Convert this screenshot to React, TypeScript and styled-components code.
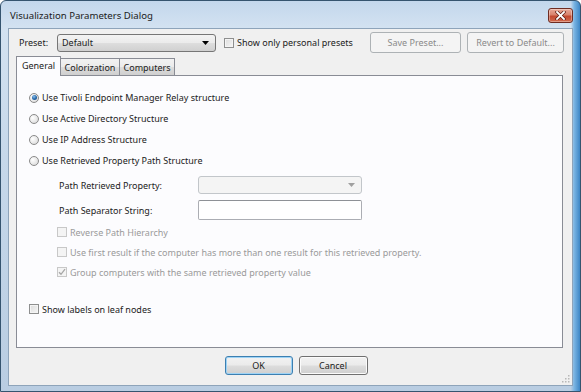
import React from "react";
import styled, { createGlobalStyle, css } from "styled-components";

const FONT = `"Noto Sans", "Open Sans", "Liberation Sans", sans-serif`;

const Global = createGlobalStyle`
  html, body { margin: 0; padding: 0; background: #ffffff; }
  body { font-family: ${FONT}; }
  * { box-sizing: border-box; }
`;

const Window = styled.div`
  width: 581px;
  height: 392px;
  display: flex;
  flex-direction: column;
  border: 1px solid #35546f;
  border-radius: 6px 6px 0 0;
  background:
    linear-gradient(90deg, rgba(0,0,0,0) 98.4%, #7ab4e2 99%, #3d86c6 100%),
    linear-gradient(180deg, #c3d7ec 0%, #d3e2f1 7%, #c6d8ea 40%, #b9cde2 100%);
  font-family: ${FONT};
  font-size: 9px;
  color: #1b1b1b;
  overflow: hidden;
`;

const TitleBar = styled.div`
  height: 27px;
  display: flex;
  align-items: flex-start;
  padding: 0 7px 0 9px;
`;

const Title = styled.div`
  font-size: 9.6px;
  line-height: 14px;
  margin-top: 8px;
  color: #1a1a1a;
`;

const CloseButton = styled.div`
  margin-left: auto;
  margin-top: 7px;
  width: 25px;
  height: 15px;
  border: 1px solid #6e2c22;
  border-radius: 3px;
  background: linear-gradient(180deg, #e8a898 0%, #d8826c 45%, #c2482f 55%, #d06a4e 100%);
  display: flex;
  align-items: center;
  justify-content: center;
  box-shadow: inset 0 0 0 1px rgba(255,255,255,0.35);
`;

const Client = styled.div`
  flex: 1;
  margin: 0 7px 5px 7px;
  background: #f0f0f0;
  border: 1px solid #8ea4ba;
  display: flex;
  flex-direction: column;
  position: relative;
`;

const TopRow = styled.div`
  display: flex;
  align-items: center;
  height: 21px;
  margin-top: 3px;
  padding: 0 8px 0 10px;
`;

const Label = styled.span<{ $disabled?: boolean }>`
  white-space: nowrap;
  color: ${(p) => (p.$disabled ? "#9a9a9a" : "#1b1b1b")};
`;

const PresetLabel = styled(Label)`
  width: 38px;
`;

const ComboBox = styled.div<{ $disabled?: boolean; $width: number }>`
  width: ${(p) => p.$width}px;
  height: 18px;
  display: flex;
  align-items: center;
  padding: 0 6px 0 4px;
  border-radius: 3px;
  ${(p) =>
    p.$disabled
      ? css`
          border: 1px solid #c2c6ca;
          background: #f4f4f4;
        `
      : css`
          border: 1px solid #767676;
          background: linear-gradient(180deg, #f3f3f3 0%, #ebebeb 48%, #dddddd 52%, #d0d0d0 100%);
        `}
`;

const ComboText = styled.span`
  flex: 1;
`;

const CheckRow = styled.label<{ $indent?: number; $mt?: number }>`
  display: flex;
  align-items: center;
  height: 20px;
  margin-left: ${(p) => p.$indent ?? 0}px;
  margin-top: ${(p) => p.$mt ?? 0}px;
  gap: 3px;
`;

const Box = styled.span<{ $disabled?: boolean }>`
  width: 10px;
  height: 10px;
  flex: none;
  display: flex;
  align-items: center;
  justify-content: center;
  ${(p) =>
    p.$disabled
      ? css`
          border: 1px solid #c8c8c8;
          background: #f4f4f4;
        `
      : css`
          border: 1px solid #8e8f8f;
          background: linear-gradient(135deg, #dcdcdc 0%, #f6f6f6 100%);
          box-shadow: inset 0 0 0 1px #f4f4f4;
        `}
`;

const Radio = styled.span<{ $checked?: boolean }>`
  width: 10px;
  height: 10px;
  border-radius: 50%;
  flex: none;
  border: 1px solid #8a8a8a;
  background: radial-gradient(circle at 35% 35%, #ffffff 0%, #e6e6e6 60%, #cfcfcf 100%);
  display: flex;
  align-items: center;
  justify-content: center;
  &::after {
    content: "";
    display: ${(p) => (p.$checked ? "block" : "none")};
    width: 5px;
    height: 5px;
    border-radius: 50%;
    background: radial-gradient(circle at 40% 35%, #8cc0ea 0%, #2a6db0 50%, #163e70 100%);
  }
`;

const ActionButton = styled.div<{ $width: number; $disabled?: boolean; $default?: boolean }>`
  width: ${(p) => p.$width}px;
  height: ${(p) => (p.$disabled ? 21 : 19)}px;
  border-radius: 3px;
  display: flex;
  align-items: center;
  justify-content: center;
  ${(p) =>
    p.$disabled
      ? css`
          border: 1px solid #adb2b5;
          background: #f4f4f4;
          color: #8a8a8a;
        `
      : p.$default
      ? css`
          border: 1px solid #3c7fb1;
          background: linear-gradient(180deg, #f2f2f2 0%, #ebebeb 48%, #dddddd 52%, #cfcfcf 100%);
          box-shadow: inset 0 0 0 1px #9ed3f5;
        `
      : css`
          border: 1px solid #707070;
          background: linear-gradient(180deg, #f2f2f2 0%, #ebebeb 48%, #dddddd 52%, #cfcfcf 100%);
          box-shadow: inset 0 0 0 1px #fbfbfb;
        `}
`;

const Spacer = styled.div`
  flex: 1;
`;

const ButtonGroup = styled.div`
  display: flex;
  gap: 6px;
`;

const Tabs = styled.div`
  display: flex;
  align-items: flex-end;
  height: 22px;
  padding-left: 7px;
  position: relative;
  z-index: 1;
`;

const Tab = styled.div<{ $selected?: boolean; $width: number }>`
  width: ${(p) => p.$width}px;
  display: flex;
  align-items: center;
  justify-content: center;
  border: 1px solid #898c95;
  margin-left: -1px;
  ${(p) =>
    p.$selected
      ? css`
          height: 20px;
          border-bottom: none;
          background: #fcfcfe;
          margin-bottom: -1px;
          padding-bottom: 2px;
          margin-left: 0;
        `
      : css`
          height: 17px;
          border-bottom: none;
          background: linear-gradient(180deg, #f2f2f2 0%, #ebebeb 50%, #dddddd 51%, #cfcfcf 100%);
        `}
`;

const Panel = styled.div`
  flex: 1;
  margin: 0 9px 0 7px;
  border: 1px solid #898c95;
  background: #fcfcfe;
  padding: 11px 12px 0 12px;
  display: flex;
  flex-direction: column;
`;

const RadioRow = styled.label`
  display: flex;
  align-items: center;
  height: 21px;
  gap: 3px;
`;

const FieldGrid = styled.div`
  display: grid;
  grid-template-columns: 139px 164px;
  row-gap: 6px;
  margin: 5px 0 0 30px;
  align-items: center;
`;

const TextBox = styled.div`
  height: 20px;
  border: 1px solid #abadb3;
  border-top-color: #8e9196;
  background: #ffffff;
  border-radius: 2px;
`;

const Footer = styled.div`
  display: flex;
  justify-content: center;
  gap: 6px;
  padding: 8px 0 10px 11px;
`;

const Grip = styled.svg`
  position: absolute;
  right: 2px;
  bottom: 2px;
`;

const Arrow = ({ color }: { color: string }) => (
  <svg width="7" height="4" viewBox="0 0 7 4">
    <path d="M0 0 H7 L3.5 4 Z" fill={color} />
  </svg>
);

const Check = () => (
  <svg width="8" height="8" viewBox="0 0 8 8">
    <path d="M1 4.2 L3 6.3 L7 1.2" stroke="#a6a6a6" strokeWidth="1.3" fill="none" />
  </svg>
);

export default function App() {
  return (
    <>
      <Global />
      <Window>
        <TitleBar>
          <Title>Visualization Parameters Dialog</Title>
          <CloseButton>
            <svg width="11" height="9" viewBox="0 0 11 9">
              <path d="M2 1 L9 8 M9 1 L2 8" stroke="#5a1a10" strokeWidth="3.2" strokeLinecap="square" />
              <path d="M2 1 L9 8 M9 1 L2 8" stroke="#ffffff" strokeWidth="1.8" strokeLinecap="square" />
            </svg>
          </CloseButton>
        </TitleBar>
        <Client>
          <TopRow>
            <PresetLabel>Preset:</PresetLabel>
            <ComboBox $width={159}>
              <ComboText>Default</ComboText>
              <Arrow color="#000000" />
            </ComboBox>
            <CheckRow $indent={8}>
              <Box />
              <Label>Show only personal presets</Label>
            </CheckRow>
            <Spacer />
            <ButtonGroup>
              <ActionButton $width={91} $disabled>Save Preset...</ActionButton>
              <ActionButton $width={97} $disabled>Revert to Default...</ActionButton>
            </ButtonGroup>
          </TopRow>
          <Tabs>
            <Tab $selected $width={45}>General</Tab>
            <Tab $width={60}>Colorization</Tab>
            <Tab $width={56}>Computers</Tab>
          </Tabs>
          <Panel>
            <RadioRow>
              <Radio $checked />
              <Label>Use Tivoli Endpoint Manager Relay structure</Label>
            </RadioRow>
            <RadioRow>
              <Radio />
              <Label>Use Active Directory Structure</Label>
            </RadioRow>
            <RadioRow>
              <Radio />
              <Label>Use IP Address Structure</Label>
            </RadioRow>
            <RadioRow>
              <Radio />
              <Label>Use Retrieved Property Path Structure</Label>
            </RadioRow>
            <FieldGrid>
              <Label>Path Retrieved Property:</Label>
              <ComboBox $width={164} $disabled>
                <ComboText />
                <Arrow color="#a0a0a0" />
              </ComboBox>
              <Label>Path Separator String:</Label>
              <TextBox />
            </FieldGrid>
            <CheckRow $indent={28} $mt={2}>
              <Box $disabled />
              <Label $disabled>Reverse Path Hierarchy</Label>
            </CheckRow>
            <CheckRow $indent={28}>
              <Box $disabled />
              <Label $disabled>Use first result if the computer has more than one result for this retrieved property.</Label>
            </CheckRow>
            <CheckRow $indent={28}>
              <Box $disabled>
                <Check />
              </Box>
              <Label $disabled>Group computers with the same retrieved property value</Label>
            </CheckRow>
            <CheckRow $mt={17}>
              <Box />
              <Label>Show labels on leaf nodes</Label>
            </CheckRow>
          </Panel>
          <Footer>
            <ActionButton $width={68} $default>OK</ActionButton>
            <ActionButton $width={69}>Cancel</ActionButton>
          </Footer>
          <Grip width="9" height="9" viewBox="0 0 9 9">
            {[
              [7, 1], [7, 4], [4, 4], [7, 7], [4, 7], [1, 7],
            ].map(([x, y], i) => (
              <rect key={i} x={x} y={y} width="1.5" height="1.5" fill="#b8b8b8" />
            ))}
          </Grip>
        </Client>
      </Window>
    </>
  );
}
